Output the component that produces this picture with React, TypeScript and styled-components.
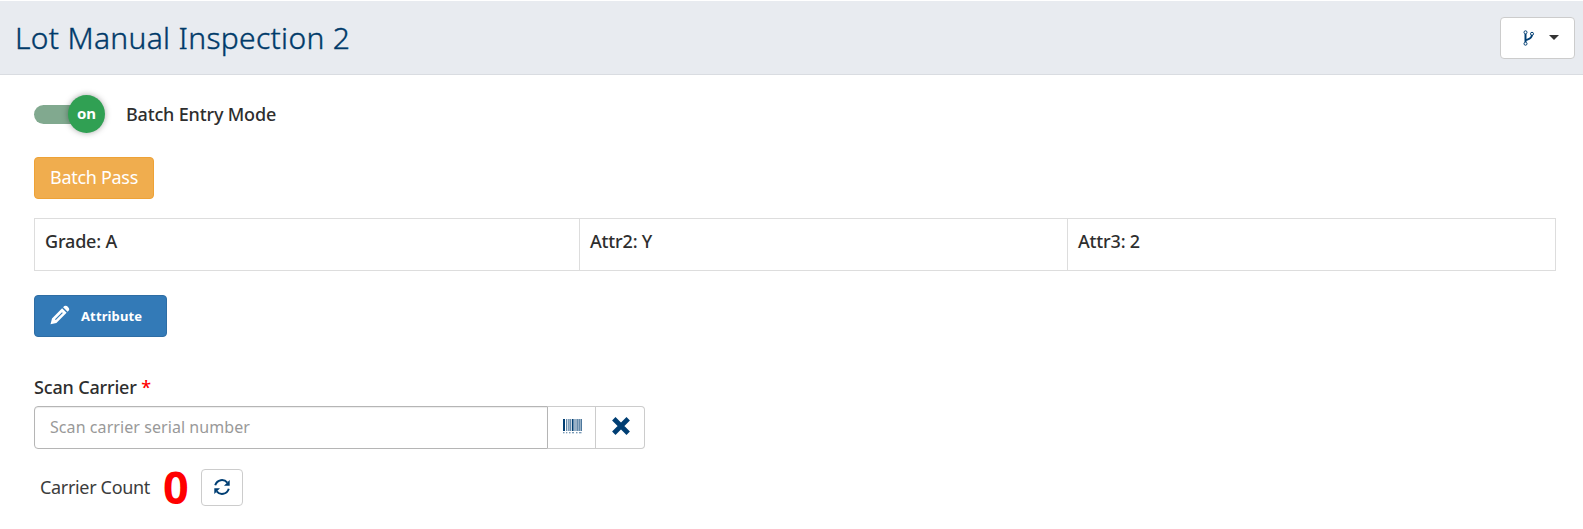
import React from "react";
import styled, { createGlobalStyle } from "styled-components";

const GlobalStyle = createGlobalStyle`
  *, *::before, *::after { box-sizing: border-box; }
  body {
    margin: 0;
    background: #fff;
    color: #2e2e2e;
    font-family: "Noto Sans", "Open Sans", sans-serif;
    font-size: 18px;
    line-height: 24px;
  }
  button, input { font-family: inherit; }
`;

const Header = styled.header`
  display: flex;
  align-items: center;
  justify-content: space-between;
  height: 74px;
  margin-top: 1px;
  padding: 0 8px 0 15px;
  background: #e8ebf0;
  border-bottom: 1px solid #d9dce1;
`;

const Title = styled.h1`
  margin: 0;
  color: #003a69;
  font-size: 30px;
  font-weight: 300;
  letter-spacing: 0.32px;
  line-height: 42px;
  -webkit-text-stroke: 0.4px currentColor;
`;

const OutlineButton = styled.button<{ $w: number; $h: number }>`
  display: flex;
  align-items: center;
  justify-content: center;
  width: ${(p) => p.$w}px;
  height: ${(p) => p.$h}px;
  padding: 0;
  background: #fff;
  border: 1px solid #ccc;
  border-radius: 4px;
  color: #003e73;
`;

const BranchButton = styled(OutlineButton)`
  justify-content: flex-start;
  gap: 14px;
  padding-left: 22px;
`;

const Caret = styled.span`
  border: 5px solid transparent;
  border-top-color: #333;
  border-bottom: 0;
`;

const Content = styled.main`
  display: flex;
  flex-direction: column;
  align-items: flex-start;
  padding: 20px 27px 0 34px;
`;

const SwitchRow = styled.label`
  display: flex;
  align-items: center;
  gap: 21px;
  height: 38px;
  font-weight: 500;
  letter-spacing: -0.17px;
`;

const Track = styled.span`
  display: flex;
  align-items: center;
  justify-content: flex-end;
  width: 71px;
  height: 19px;
  border-radius: 10px;
  background: linear-gradient(90deg, #81a98f 60px, transparent 60px);
`;

const Knob = styled.span`
  width: 37px;
  height: 38px;
  border-radius: 50%;
  background: #30a053;
  box-shadow: 0 0 6px rgba(0, 0, 0, 0.35);
  color: #fff;
  font-size: 15px;
  font-weight: 700;
  line-height: 37px;
  text-align: center;
`;

const PassButton = styled.button`
  width: 120px;
  height: 42px;
  margin-top: 24px;
  padding: 0 0 2px;
  background: #f0ad4e;
  border: 1px solid #eea236;
  border-radius: 4px;
  color: #fff;
  font-size: 18px;
  letter-spacing: -0.3px;
`;

const AttributeTable = styled.div`
  display: grid;
  grid-template-columns: 544px 488px 1fr;
  width: 100%;
  height: 53px;
  margin-top: 19px;
  border: 1px solid #ddd;
`;

const AttributeCell = styled.div`
  padding: 10px;
  font-weight: 500;
  letter-spacing: -0.17px;
  & + & { border-left: 1px solid #ddd; }
`;

const PrimaryButton = styled.button`
  display: flex;
  align-items: center;
  gap: 11px;
  width: 133px;
  height: 42px;
  margin-top: 24px;
  padding: 0 0 0 15px;
  background: #337ab7;
  border: 1px solid #2e6da4;
  border-radius: 4px;
  color: #fff;
  font-size: 13px;
  font-weight: 700;
  letter-spacing: 0.12px;

  svg { margin-top: -2px; }
`;

const FieldLabel = styled.label`
  margin-top: 38px;
  font-weight: 500;
  letter-spacing: -0.17px;
`;

const Required = styled.span`
  color: #f00;
`;

const InputGroup = styled.div`
  display: flex;
  height: 43px;
  margin-top: 7px;
`;

const ScanInput = styled.input`
  width: 514px;
  padding: 0 15px 2px;
  border: 1px solid #b5b5b5;
  border-radius: 4px 0 0 4px;
  box-shadow: inset 0 1px 1px rgba(0, 0, 0, 0.075);
  font-size: 16px;
  letter-spacing: 0.07px;
  &::placeholder { color: #999; opacity: 1; }
`;

const Addon = styled(OutlineButton)`
  padding: 0 0 3px 1px;
  border-left: 0;
  border-radius: 0;
  &:last-child { border-radius: 0 4px 4px 0; }
`;

const CountRow = styled.div`
  display: flex;
  align-items: center;
  height: 38px;
  margin: 19px 0 0 6px;
  color: #3c3c3c;
  letter-spacing: -0.33px;
`;

const Count = styled.span`
  margin: 0 13px;
  color: #f00;
  font-size: 45px;
  font-weight: 700;
  line-height: 38px;
`;

const BranchIcon = () => (
  <svg width="12" height="16" viewBox="0 0 12 16" fill="none" stroke="currentColor">
    <path d="M2.5 4v8M2.5 10.6C3.5 9.3 8.6 9.7 8.9 5" strokeWidth="2" />
    <circle cx="2.5" cy="2.3" r="1.5" strokeWidth="1" />
    <circle cx="2.5" cy="13.7" r="1.5" strokeWidth="1" />
    <circle cx="9" cy="3.8" r="1.5" strokeWidth="1" />
  </svg>
);

const PencilIcon = () => (
  <svg width="20" height="20" viewBox="0 0 20 20">
    <path
      d="M.5 19.3 2 13.4 12.1 3.3l4.5 4.5L6.4 17.9ZM13.1 2.3 14.3 1.1Q15.5.2 17 1.1L18.8 2.9Q19.8 4.3 18.8 5.6L17.6 6.8Z"
      fill="currentColor"
    />
    <path d="m5.4 14.6 7-7" stroke="#337ab7" strokeWidth="1.1" />
  </svg>
);

const BarcodeIcon = () => (
  <svg width="19" height="15" viewBox="0 0 19 15" fill="currentColor">
    <path d="M0 0h2v12H0z" />
    <path d="M3.4 0h.8v12h-.8zM5.5 0h.9v12h-.9zM7.4 0h.8v12h-.8zM9 0h1.6v12H9zM11.6 0h.8v12h-.8zM13.6 0h1v12h-1zM15.6 0h1v12h-1zM17.6 0h1.1v12h-1.1z" />
    <path d="M0 13.3h1.5v.9H0zM3 13.3h1.3v.9H3zM6 13.3h1.5v.9H6zM9 13.3h2v.9H9zM13 13.3h1.5v.9H13zM16 13.3h2.5v.9H16z" opacity=".7" />
  </svg>
);

const CloseIcon = () => (
  <svg width="18" height="18" viewBox="0 0 18 18" stroke="currentColor" strokeWidth="4.8">
    <path d="m1.8 1.8 14.4 14.4M16.2 1.8 1.8 16.2" />
  </svg>
);

const RefreshIcon = () => (
  <svg width="16" height="16" viewBox="0 0 16 16" fill="none" stroke="currentColor" strokeWidth="2">
    <path d="M1.2 6.2C3.2.2 10-.4 13.3 3.6M14.8 9.8C12.8 15.8 6 16.4 2.7 12.4" />
    <path d="M15.7 1v5.7H10zM.3 15V9.3H6z" fill="currentColor" stroke="none" />
  </svg>
);

const attributes = ["Grade: A", "Attr2: Y", "Attr3: 2"];

export default function App() {
  return (
    <>
      <GlobalStyle />
      <Header>
        <Title>Lot Manual Inspection 2</Title>
        <BranchButton $w={75} $h={42} aria-label="Workflow">
          <BranchIcon />
          <Caret />
        </BranchButton>
      </Header>
      <Content>
        <SwitchRow>
          <Track>
            <Knob>on</Knob>
          </Track>
          Batch Entry Mode
        </SwitchRow>
        <PassButton>Batch Pass</PassButton>
        <AttributeTable>
          {attributes.map((text) => (
            <AttributeCell key={text}>{text}</AttributeCell>
          ))}
        </AttributeTable>
        <PrimaryButton>
          <PencilIcon />
          Attribute
        </PrimaryButton>
        <FieldLabel>
          Scan Carrier <Required>*</Required>
        </FieldLabel>
        <InputGroup>
          <ScanInput placeholder="Scan carrier serial number" />
          <Addon $w={48} $h={43} aria-label="Scan barcode">
            <BarcodeIcon />
          </Addon>
          <Addon $w={49} $h={43} aria-label="Clear">
            <CloseIcon />
          </Addon>
        </InputGroup>
        <CountRow>
          Carrier Count
          <Count>0</Count>
          <OutlineButton $w={42} $h={37} aria-label="Refresh">
            <RefreshIcon />
          </OutlineButton>
        </CountRow>
      </Content>
    </>
  );
}
